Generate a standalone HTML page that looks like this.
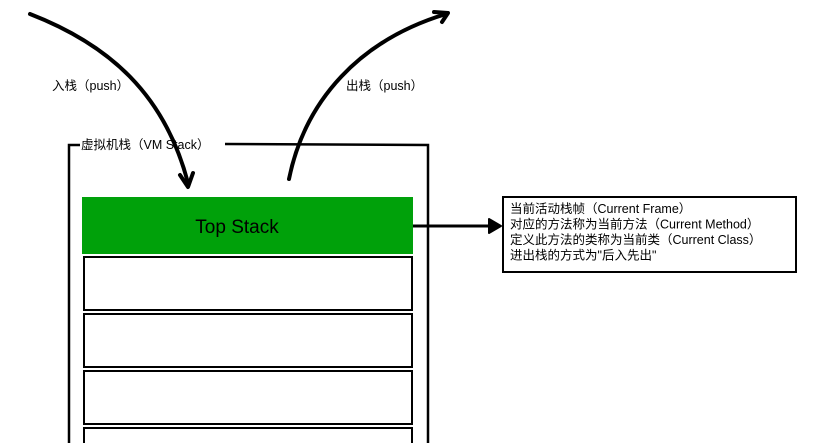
<!DOCTYPE html>
<html><head><meta charset="utf-8">
<style>
html,body{margin:0;padding:0;background:#fff;}
svg{display:block}
text{font-family:"Liberation Sans","Noto Sans CJK SC",sans-serif;fill:#000}
</style></head>
<body>
<svg width="839" height="443" viewBox="0 0 839 443" xmlns="http://www.w3.org/2000/svg">
<path d="M80 145 L69 145 L69 443" fill="none" stroke="#000" stroke-width="2.5"/>
<path d="M225 144 L428 145 L428 443" fill="none" stroke="#000" stroke-width="2.5"/>
<text x="81" y="149" font-size="12.5">虚拟机栈（VM Stack）</text>
<rect x="82" y="197" width="331" height="57" fill="#00a10a"/>
<text x="237" y="233" font-size="19" text-anchor="middle">Top Stack</text>
<rect x="84" y="257" width="328" height="53" fill="#fff" stroke="#000" stroke-width="2"/>
<rect x="84" y="314" width="328" height="53" fill="#fff" stroke="#000" stroke-width="2"/>
<rect x="84" y="371" width="328" height="53" fill="#fff" stroke="#000" stroke-width="2"/>
<rect x="84" y="428" width="328" height="30" fill="#fff" stroke="#000" stroke-width="2"/>
<path d="M30 14 C110 45 165 95 188 183" fill="none" stroke="#000" stroke-width="4" stroke-linecap="round"/>
<path d="M180 175 L188 187 L193 173" fill="none" stroke="#000" stroke-width="4" stroke-linecap="round" stroke-linejoin="round"/>
<text x="52" y="90" font-size="12.5">入栈（push）</text>
<path d="M289 179 C305 100 360 40 446 14" fill="none" stroke="#000" stroke-width="4" stroke-linecap="round"/>
<path d="M434 12 L448 13 L442 22" fill="none" stroke="#000" stroke-width="4" stroke-linecap="round" stroke-linejoin="round"/>
<text x="346" y="90" font-size="12.5">出栈（push）</text>
<path d="M413 226 L494 226" stroke="#000" stroke-width="3"/>
<path d="M489 219 L501 226 L489 233 Z" fill="#000" stroke="#000" stroke-width="2" stroke-linejoin="round"/>
<rect x="503" y="197" width="293" height="75" fill="#fff" stroke="#000" stroke-width="2"/>
<text font-size="12.5" x="510" y="213">当前活动栈帧（Current Frame）</text>
<text font-size="12.5" x="510" y="228.5">对应的方法称为当前方法（Current Method）</text>
<text font-size="12.5" x="510" y="244">定义此方法的类称为当前类（Current Class）</text>
<text font-size="12.5" x="510" y="259.5">进出栈的方式为"后入先出"</text>
</svg>
</body></html>
